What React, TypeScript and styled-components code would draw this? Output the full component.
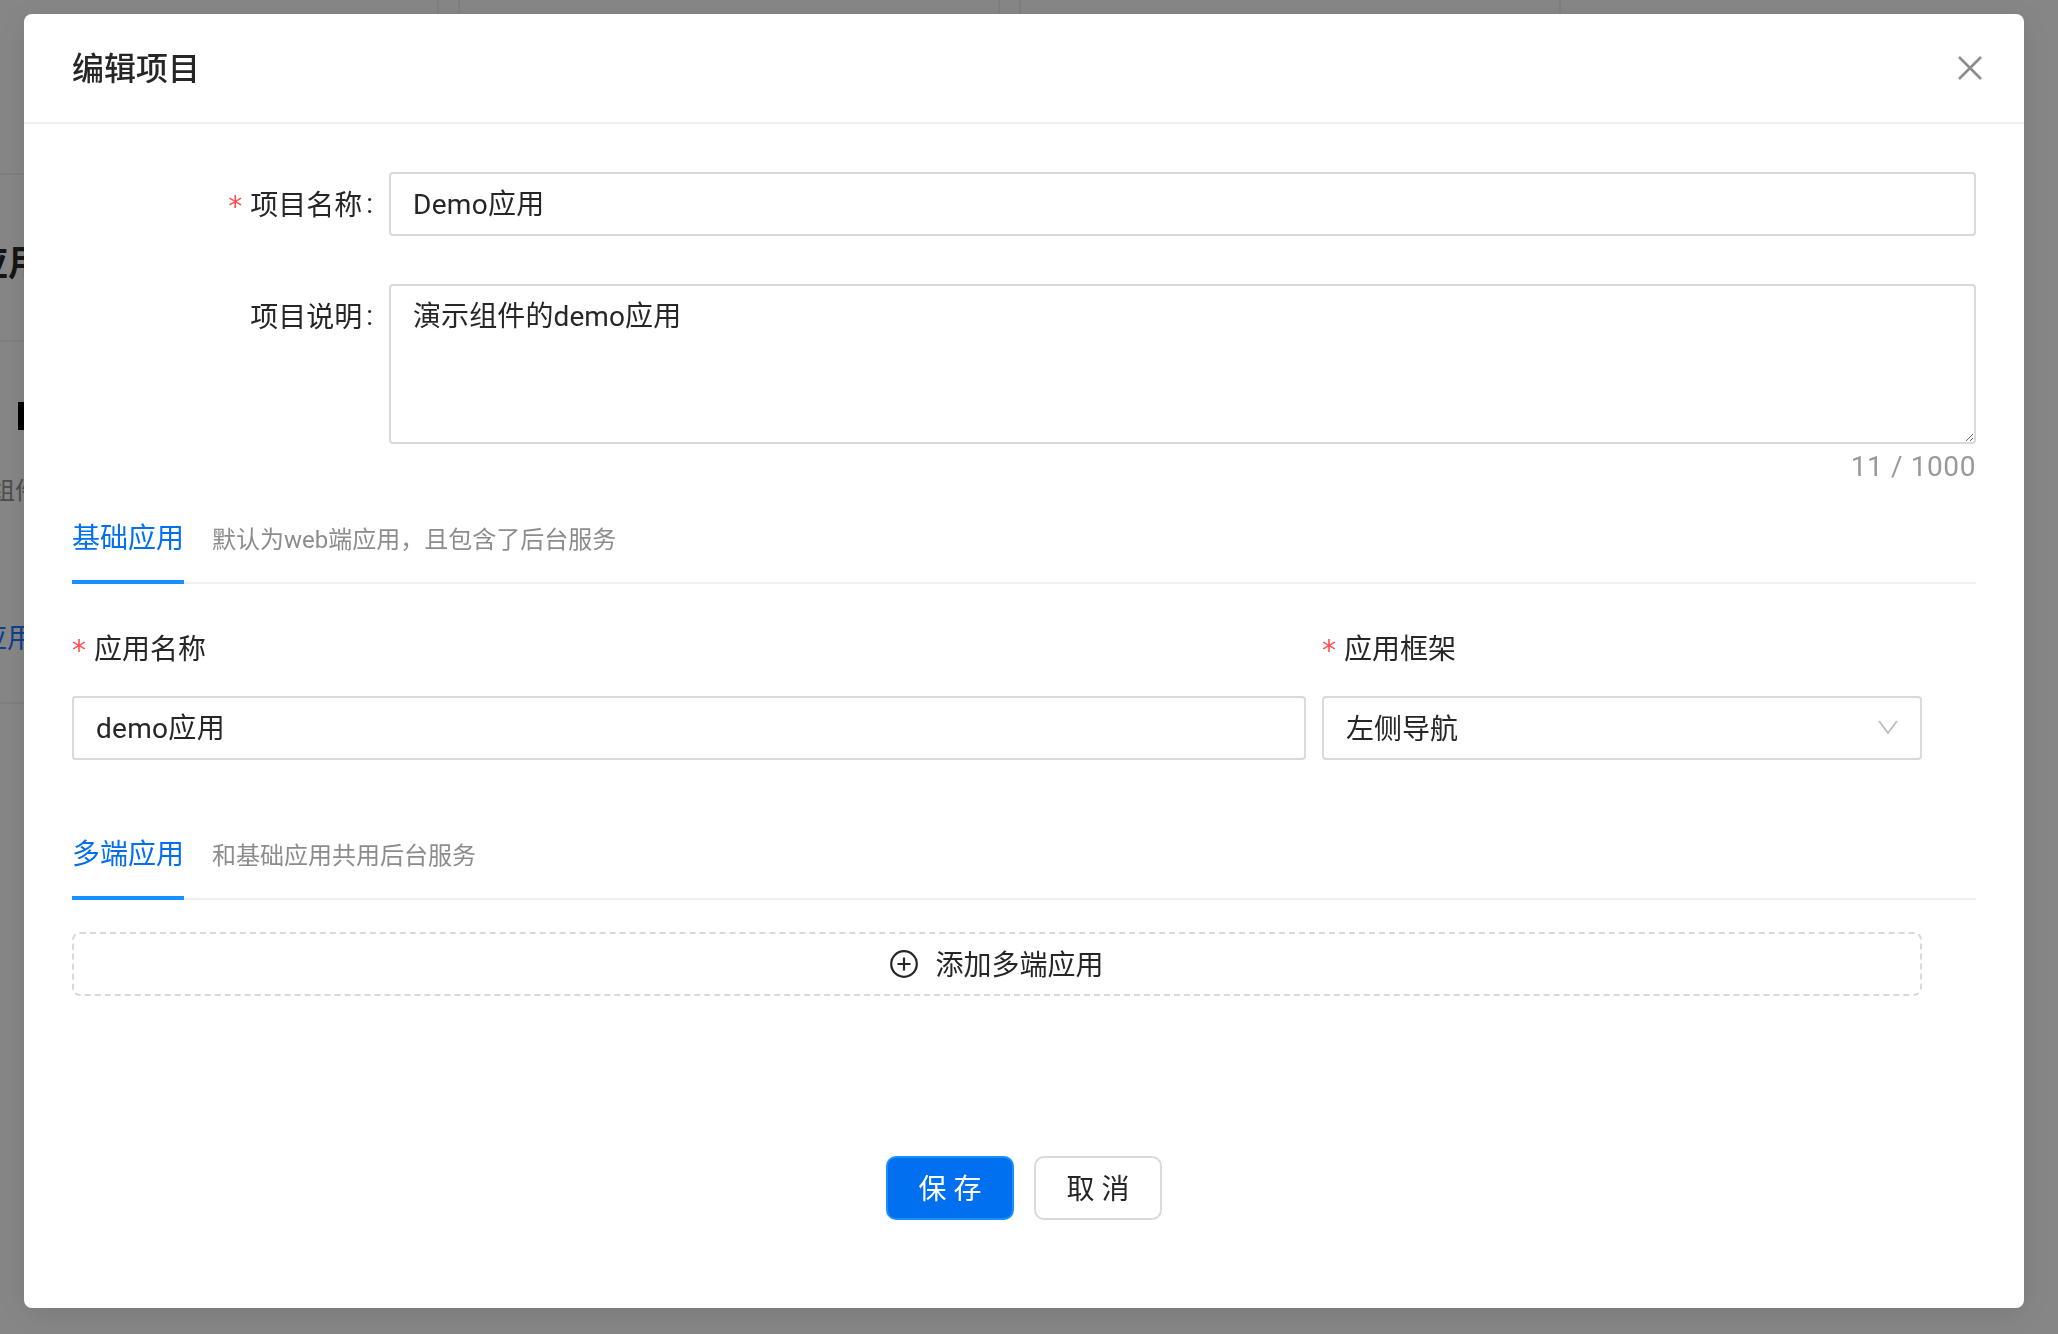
import React from "react";
import styled, { createGlobalStyle } from "styled-components";

const GlobalStyle = createGlobalStyle`
  html, body {
    margin: 0;
    height: 100%;
    overflow: hidden;
    background: #f5f5f5;
  }
  * {
    box-sizing: border-box;
  }
  body, input, textarea, button {
    font-family: Roboto, "Noto Sans CJK SC", sans-serif;
    font-size: 28px;
    color: #262626;
  }
`;

const CloseIcon = () => (
  <svg width="24" height="24" viewBox="0 0 24 24" fill="none" stroke="#8c8c8c" strokeWidth="2.6">
    <path d="M1 1l22 22M23 1L1 23" />
  </svg>
);

const ChevronIcon = () => (
  <svg width="20" height="14" viewBox="0 0 20 14" fill="none" stroke="#bfbfbf" strokeWidth="2">
    <path d="M1 1l9 12 9-12" />
  </svg>
);

const PlusCircleIcon = () => (
  <svg width="28" height="28" viewBox="0 0 28 28" fill="none" stroke="#262626" strokeWidth="2.2">
    <circle cx="14" cy="14" r="12.8" />
    <path d="M14 7.5v13M7.5 14h13" />
  </svg>
);

const Tab = ({ title, hint }: { title: string; hint: string }) => (
  <TabBar>
    <TabTitle>{title}</TabTitle>
    <TabHint>{hint}</TabHint>
  </TabBar>
);

export default function App() {
  return (
    <>
      <GlobalStyle />
      <Page>
        <CardRow>
          <BackCard />
          <BackCard />
          <BackCard />
        </CardRow>
        <HeadingRow>
          <BackHeading>应用</BackHeading>
        </HeadingRow>
        <DetailBlock>
          <AccentBar />
          <BackNote>组件</BackNote>
          <BackLink>应用</BackLink>
        </DetailBlock>
      </Page>
      <Overlay>
        <Modal>
          <ModalHeader>
            <ModalTitle>编辑项目</ModalTitle>
            <CloseIcon />
          </ModalHeader>
          <ModalBody>
            <FormRow>
              <FormLabel>
                <Star>*</Star>
                项目名称
                <Colon>:</Colon>
              </FormLabel>
              <TextInput defaultValue="Demo应用" readOnly />
            </FormRow>
            <FormRow $gap={0}>
              <FormLabel>
                项目说明
                <Colon>:</Colon>
              </FormLabel>
              <div>
                <TextArea defaultValue="演示组件的demo应用" readOnly />
                <Counter>11 / 1000</Counter>
              </div>
            </FormRow>

            <Tab title="基础应用" hint="默认为web端应用，且包含了后台服务" />
            <AppFields>
              <div>
                <FieldLabel>
                  <Star>*</Star>
                  应用名称
                </FieldLabel>
                <TextInput defaultValue="demo应用" readOnly />
              </div>
              <div>
                <FieldLabel>
                  <Star>*</Star>
                  应用框架
                </FieldLabel>
                <SelectBox>
                  左侧导航
                  <ChevronIcon />
                </SelectBox>
              </div>
            </AppFields>

            <SecondTab>
              <Tab title="多端应用" hint="和基础应用共用后台服务" />
            </SecondTab>
            <AddButton>
              <PlusCircleIcon />
              <AddLabel>添加多端应用</AddLabel>
            </AddButton>

            <Footer>
              <ActionBtn $primary>保 存</ActionBtn>
              <ActionBtn>取 消</ActionBtn>
            </Footer>
          </ModalBody>
        </Modal>
      </Overlay>
    </>
  );
}

const Page = styled.div`
  width: 1900px;
  height: 1334px;
  overflow: hidden;
`;

const CardRow = styled.div`
  display: flex;
  gap: 19px;
  height: 175px;
  margin-left: -103px;
  border-bottom: 2px solid #e8e8e8;
`;

const BackCard = styled.div`
  flex: none;
  width: 542px;
  border-left: 2px solid #e8e8e8;
  border-right: 2px solid #e8e8e8;
`;

const HeadingRow = styled.div`
  display: flex;
  align-items: center;
  height: 167px;
  padding-top: 13px;
  border-bottom: 2px solid #e8e8e8;
`;

const BackHeading = styled.div`
  margin-left: -28px;
  font-size: 36px;
  line-height: 44px;
  font-weight: 700;
`;

const DetailBlock = styled.div`
  height: 362px;
  padding-top: 60px;
  border-bottom: 2px solid #e8e8e8;
`;

const AccentBar = styled.div`
  width: 8px;
  height: 28px;
  margin-left: 18px;
  background: #000;
`;

const BackNote = styled.div`
  margin: 45px 0 0 -9px;
  font-size: 24px;
  line-height: 32px;
  color: #8c8c8c;
`;

const BackLink = styled.div`
  margin: 114px 0 0 -21px;
  font-size: 28px;
  line-height: 36px;
  color: #1677ff;
`;

const Overlay = styled.div`
  position: fixed;
  inset: 0;
  display: flex;
  align-items: flex-start;
  padding: 14px 0 0 24px;
  background: rgba(0, 0, 0, 0.45);
`;

const Modal = styled.div`
  width: 2000px;
  border-radius: 8px;
  background: #fff;
  box-shadow: 0 6px 32px rgba(0, 0, 0, 0.12);
`;

const ModalHeader = styled.header`
  display: flex;
  align-items: center;
  justify-content: space-between;
  height: 110px;
  padding: 0 42px 0 48px;
  border-bottom: 2px solid #f0f0f0;
`;

const ModalTitle = styled.div`
  padding-top: 2px;
  font-size: 32px;
  line-height: 44px;
  font-weight: 500;
`;

const ModalBody = styled.div`
  padding: 48px 48px 88px 48px;
`;

const FormRow = styled.div<{ $gap?: number }>`
  display: grid;
  grid-template-columns: 317px 1fr;
  margin-bottom: ${({ $gap }) => $gap ?? 48}px;
`;

const FormLabel = styled.label`
  display: flex;
  justify-content: flex-end;
  align-items: center;
  height: 64px;
  padding-bottom: 2px;
`;

const Colon = styled.span`
  margin: 0 16px 0 4px;
`;

const Star = styled.span`
  margin: 8px 8px 0 0;
  font-family: "DejaVu Sans", sans-serif;
  font-size: 28px;
  line-height: 1;
  color: #ff4d4f;
`;

const fieldBorder = "2px solid #d9d9d9";

const TextInput = styled.input`
  display: block;
  width: 100%;
  height: 64px;
  padding: 0 22px 4px;
  border: ${fieldBorder};
  border-radius: 4px;
  outline: none;
  letter-spacing: 0.3px;
  background: #fff;
`;

const TextArea = styled.textarea`
  display: block;
  width: 100%;
  height: 160px;
  padding: 9px 22px;
  border: ${fieldBorder};
  border-radius: 4px;
  outline: none;
  line-height: 44px;
  letter-spacing: 0.1px;
  background: #fff;
`;

const Counter = styled.div`
  height: 44px;
  line-height: 46px;
  letter-spacing: 0.6px;
  text-align: right;
  color: #999;
`;

const TabBar = styled.div`
  display: flex;
  align-items: center;
  box-shadow: inset 0 -2px 0 #f0f0f0;
`;

const TabTitle = styled.div`
  padding: 29px 0 19px;
  line-height: 44px;
  border-bottom: 4px solid #1890ff;
  color: #006ff0;
`;

const TabHint = styled.div`
  margin-left: 28px;
  padding-top: 2px;
  font-size: 24px;
  color: #8c8c8c;
`;

const AppFields = styled.div`
  display: grid;
  grid-template-columns: 1234px 600px;
  gap: 16px;
  margin-top: 41px;
`;

const FieldLabel = styled.div`
  display: flex;
  align-items: center;
  height: 44px;
  margin-bottom: 27px;
`;

const SelectBox = styled.div`
  display: flex;
  align-items: center;
  justify-content: space-between;
  height: 64px;
  padding: 0 22px 2px;
  border: ${fieldBorder};
  border-radius: 4px;
`;

const SecondTab = styled.div`
  margin-top: 44px;
`;

const AddButton = styled.div`
  display: flex;
  align-items: center;
  justify-content: center;
  gap: 17px;
  width: 1850px;
  height: 64px;
  margin-top: 32px;
  border: 2px dashed #d9d9d9;
  border-radius: 8px;
`;

const AddLabel = styled.span`
  padding-bottom: 2px;
`;

const Footer = styled.div`
  display: flex;
  justify-content: center;
  gap: 20px;
  margin-top: 160px;
`;

const ActionBtn = styled.button<{ $primary?: boolean }>`
  width: 128px;
  height: 64px;
  padding: 0 0 3px;
  border-radius: 10px;
  border: 2px solid ${({ $primary }) => ($primary ? "#1890ff" : "#d9d9d9")};
  background: ${({ $primary }) => ($primary ? "#006ff0" : "#fff")};
  color: ${({ $primary }) => ($primary ? "#fff" : "#262626")};
  white-space: pre;
`;
